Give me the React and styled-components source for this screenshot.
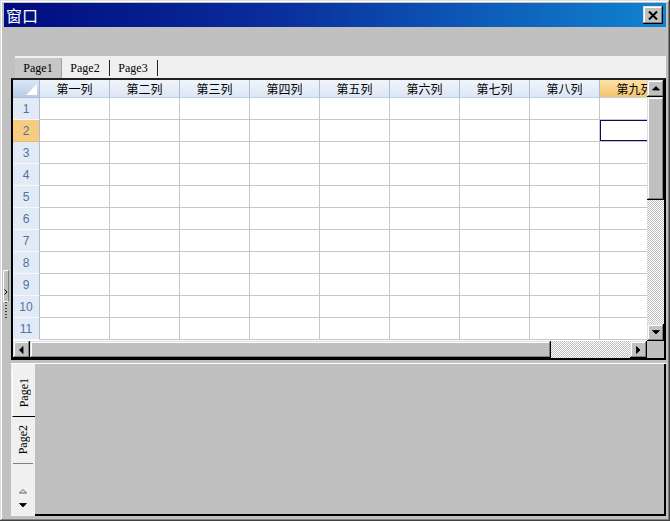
import React from 'react';
import styled, { createGlobalStyle } from 'styled-components';

const GlobalStyle = createGlobalStyle`
  * { box-sizing: border-box; }
  html, body { margin: 0; padding: 0; background: #c0c0c0; }
  body { font-family: "Noto Sans CJK SC", "Liberation Sans", sans-serif; }
`;

const bevel = `
  background: #c0c0c0;
  box-shadow: inset -1px -1px #000, inset 1px 1px #dfdfdf, inset -2px -2px #808080, inset 2px 2px #fff;
`;

const dither = `
  background: repeating-conic-gradient(#c0c0c0 0 25%, #ffffff 0 50%) 0 0 / 2px 2px;
`;

const Window = styled.div`
  position: relative;
  width: 670px;
  height: 521px;
  display: flex;
  flex-direction: column;
  padding: 3px 4px 5px 4px;
  background: #c0c0c0;
  box-shadow: inset -1px -1px #404040, inset 1px 1px #dfdfdf, inset -2px -2px #808080, inset 2px 2px #fff;
`;

const TitleBar = styled.div`
  flex: none;
  height: 24px;
  display: flex;
  align-items: center;
  justify-content: space-between;
  padding: 0 3px 0 2px;
  background: linear-gradient(to right, #000c80 0%, #0a2c9c 40%, #1084d0 100%);
  color: #fff;
  font-size: 16px;
  line-height: 1;
`;

const CloseBtn = styled.div`
  ${bevel}
  width: 20px;
  height: 18px;
  display: flex;
  align-items: center;
  justify-content: center;
`;

const Toolbar = styled.div`
  flex: none;
  height: 29px;
`;

const UpperPanel = styled.div`
  flex: none;
  margin-left: 7px;
  display: flex;
  flex-direction: column;
`;

const TabStrip = styled.div`
  height: 22px;
  margin-left: 4px;
  padding-top: 2px;
  background: #f0f0f0;
  display: flex;
  align-items: stretch;
`;

const Tab = styled.div`
  width: 47px;
  display: flex;
  align-items: center;
  justify-content: center;
  font-family: "Liberation Serif", serif;
  font-size: 12px;
  color: #000;
  background: ${p => (p.$active ? '#c6c6c6' : 'transparent')};
  border-right: 1px solid ${p => (p.$active ? '#a0a0a0' : 'transparent')};
`;

const TabSep = styled.div`
  width: 1px;
  margin: 2px 0;
  background: #202020;
`;

const GridFrame = styled.div`
  height: 282px;
  border: 2px solid #000;
  border-top-color: #202020;
  display: grid;
  grid-template-columns: 1fr 17px;
  grid-template-rows: 1fr 17px;
  background: #fff;
`;

const Sheet = styled.div`
  overflow: hidden;
  display: grid;
  grid-template-columns: 27px repeat(9, 70px);
  grid-template-rows: 18px repeat(11, 22px);
`;

const CornerCell = styled.div`
  background: linear-gradient(#dbe6f5, #b8cce8);
  border-right: 1px solid #a8bcd6;
  border-bottom: 1px solid #a8bcd6;
  display: flex;
  align-items: flex-end;
  justify-content: flex-end;
  padding: 0 2px 2px 0;
`;

const ColHead = styled.div`
  display: flex;
  align-items: center;
  justify-content: center;
  font-size: 12px;
  color: #000;
  white-space: nowrap;
  background: ${p =>
    p.$active ? 'linear-gradient(#fbe1a8, #f5c46e)' : 'linear-gradient(#f1f5fb, #dce6f4)'};
  border-right: 1px solid ${p => (p.$active ? '#e0b060' : '#a8bcd6')};
  border-bottom: 1px solid #c0cfe4;
`;

const RowHead = styled.div`
  display: flex;
  align-items: center;
  justify-content: center;
  font-family: "Liberation Sans", Arial, sans-serif;
  font-size: 12px;
  color: #4f72a6;
  background: ${p => (p.$active ? '#f8cc80' : '#e2eaf6')};
  border-right: 1px solid #a8bcd6;
  border-bottom: 1px solid ${p => (p.$active ? '#e8b868' : '#f4f7fc')};
`;

const Cell = styled.div`
  background: #fff;
  border-right: 1px solid #c6c6c6;
  border-bottom: 1px solid #c6c6c6;
  box-shadow: ${p => (p.$selected ? 'inset 0 0 0 1px #0c0c5c' : 'none')};
`;

const VScroll = styled.div`
  display: flex;
  flex-direction: column;
`;

const HScroll = styled.div`
  display: flex;
`;

const ScrollBtn = styled.div`
  ${bevel}
  flex: none;
  width: 17px;
  height: 17px;
  display: flex;
  align-items: center;
  justify-content: center;
`;

const Thumb = styled.div`
  ${bevel}
  flex: none;
  ${p => (p.$vertical ? `height: ${p.$size}px;` : `width: ${p.$size}px;`)}
`;

const Track = styled.div`
  flex: 1;
  ${dither}
`;

const ScrollCorner = styled.div`
  background: #c0c0c0;
`;

const SplitGap = styled.div`
  flex: none;
  height: 3px;
`;

const LowerPanel = styled.div`
  flex: 1;
  margin-left: 7px;
  display: flex;
  border-top: 1px solid #fff;
`;

const SideTabs = styled.div`
  width: 24px;
  background: #f0f0f0;
  padding-top: 6px;
  display: flex;
  flex-direction: column;
  align-items: stretch;
`;

const VTab = styled.div`
  height: 47px;
  display: flex;
  align-items: center;
  justify-content: center;
  margin: ${p => (p.$active ? '0 0 0 1px' : '0 2px')};
  border-left: ${p => (p.$active ? '1px solid #fff' : 'none')};
  border-bottom: 1px solid ${p => (p.$active ? '#000' : '#808080')};
`;

const VLabel = styled.span`
  writing-mode: vertical-rl;
  transform: rotate(180deg);
  font-family: "Liberation Serif", serif;
  font-size: 12px;
  color: #000;
`;

const SideArrows = styled.div`
  margin-top: auto;
  padding-bottom: 6px;
  display: flex;
  flex-direction: column;
  align-items: center;
  gap: 6px;
`;

const PanelBody = styled.div`
  flex: 1;
  background: #c0c0c0;
  border-right: 2px solid #000;
  border-bottom: 2px solid #000;
`;

const Handle = styled.div`
  position: absolute;
  left: 3px;
  top: 270px;
  width: 6px;
  display: flex;
  flex-direction: column;
  align-items: center;
`;

const HandleBox = styled.div`
  width: 6px;
  height: 32px;
  border: 1px solid #fff;
  border-right-color: #808080;
  display: flex;
  align-items: flex-end;
  justify-content: center;
  padding-bottom: 6px;
`;

const HandleDots = styled.div`
  width: 2px;
  height: 16px;
  background: repeating-linear-gradient(#404040 0 1px, transparent 1px 3px);
`;

const Arrow = ({ dir, hollow }) => {
  const pts = {
    up: '0.5,5 4,1.5 7.5,5',
    down: '0.5,1.5 4,5 7.5,1.5',
    left: '5,0.5 1.5,4 5,7.5',
    right: '1.5,0.5 5,4 1.5,7.5',
  }[dir];
  return (
    <svg width="8" height="8" viewBox="0 0 8 8">
      <polygon points={pts} fill={hollow ? 'none' : '#000'} stroke={hollow ? '#404040' : '#000'} strokeWidth="0.8" />
    </svg>
  );
};

const columns = ['第一列', '第二列', '第三列', '第四列', '第五列', '第六列', '第七列', '第八列', '第九列'];
const rows = Array.from({ length: 11 }, (_, i) => i + 1);

export default function App() {
  return (
    <>
      <GlobalStyle />
      <Window>
        <TitleBar>
          <span>窗口</span>
          <CloseBtn>
            <svg width="10" height="9" viewBox="0 0 10 9">
              <path d="M1 0.5 L9 8.5 M9 0.5 L1 8.5" stroke="#000" strokeWidth="2" />
            </svg>
          </CloseBtn>
        </TitleBar>
        <Toolbar />
        <UpperPanel>
          <TabStrip>
            <Tab $active>Page1</Tab>
            <Tab>Page2</Tab>
            <TabSep />
            <Tab>Page3</Tab>
            <TabSep />
          </TabStrip>
          <GridFrame>
            <Sheet>
              <CornerCell>
                <svg width="11" height="11" viewBox="0 0 11 11">
                  <polygon points="11,0 11,11 0,11" fill="#fff" />
                </svg>
              </CornerCell>
              {columns.map((c, i) => (
                <ColHead key={c} $active={i === 8}>{c}</ColHead>
              ))}
              {rows.map(r => (
                <React.Fragment key={r}>
                  <RowHead $active={r === 2}>{r}</RowHead>
                  {columns.map((c, i) => (
                    <Cell key={c} $selected={r === 2 && i === 8} />
                  ))}
                </React.Fragment>
              ))}
            </Sheet>
            <VScroll>
              <ScrollBtn><Arrow dir="up" /></ScrollBtn>
              <Thumb $vertical $size={103} />
              <Track />
              <ScrollBtn><Arrow dir="down" /></ScrollBtn>
            </VScroll>
            <HScroll>
              <ScrollBtn><Arrow dir="left" /></ScrollBtn>
              <Thumb $size={521} />
              <Track />
              <ScrollBtn><Arrow dir="right" /></ScrollBtn>
            </HScroll>
            <ScrollCorner />
          </GridFrame>
        </UpperPanel>
        <SplitGap />
        <LowerPanel>
          <SideTabs>
            <VTab $active><VLabel>Page1</VLabel></VTab>
            <VTab><VLabel>Page2</VLabel></VTab>
            <SideArrows>
              <Arrow dir="up" hollow />
              <Arrow dir="down" />
            </SideArrows>
          </SideTabs>
          <PanelBody />
        </LowerPanel>
        <Handle>
          <HandleBox>
            <svg width="4" height="6" viewBox="0 0 4 6">
              <path d="M0.5 0.5 L3 3 L0.5 5.5" stroke="#000" strokeWidth="1" fill="none" />
            </svg>
          </HandleBox>
          <HandleDots />
        </Handle>
      </Window>
    </>
  );
}
